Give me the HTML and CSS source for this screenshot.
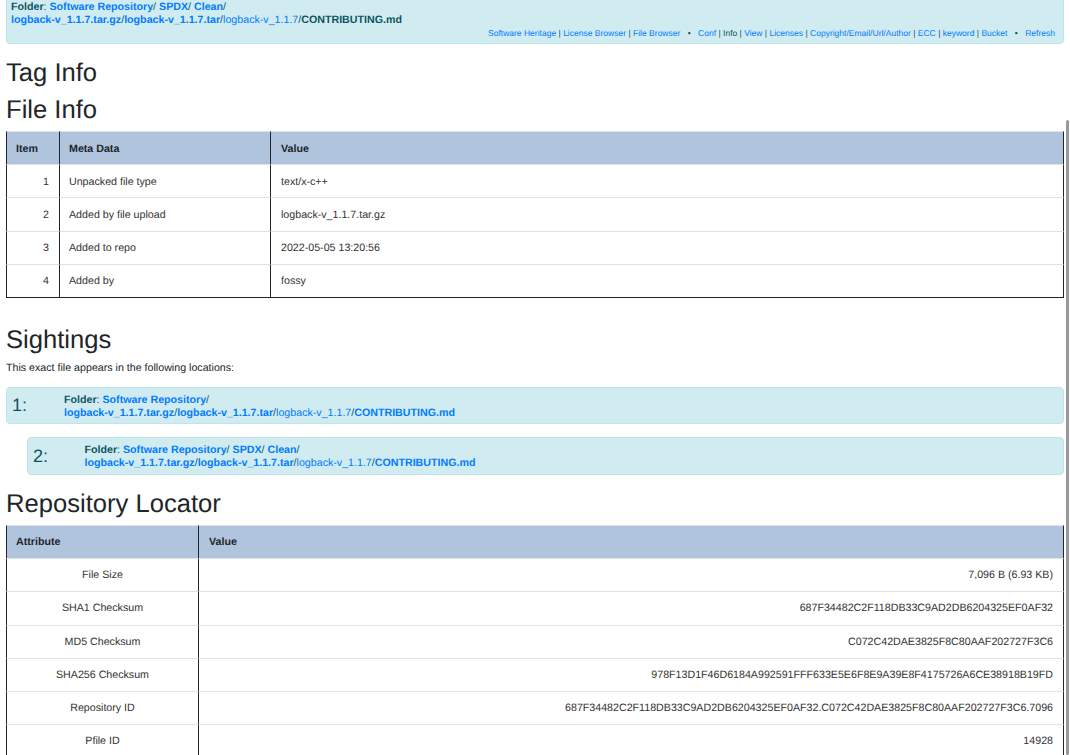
FILE: index.html
```html
<!DOCTYPE html>
<html lang="en">
<head>
  <meta charset="UTF-8">
  <meta name="viewport" content="width=device-width, initial-scale=1.0">
  <title>View File Information</title>
  <link rel="stylesheet" href="styles.css">
</head>

<body>
  <div class="scrollbar"></div>

  <div class="alert top-path">
    <div class="path">
      <b>Folder</b>: <a class="b" href="#">Software Repository</a>/ <a class="b" href="#">SPDX</a>/ <a class="b" href="#">Clean</a>/<br>
      <a class="b" href="#">logback-v_1.1.7.tar.gz</a>/<a class="b" href="#">logback-v_1.1.7.tar</a>/<a href="#">logback-v_1.1.7</a>/<b>CONTRIBUTING.md</b>
    </div>
    <div class="menu">
      <a href="#">Software Heritage</a> | <a href="#">License Browser</a> | <a href="#">File Browser</a>
      <span class="dot">&bull;</span>
      <a href="#">Conf</a> | Info | <a href="#">View</a> | <a href="#">Licenses</a> | <a href="#">Copyright/Email/Url/Author</a> | <a href="#">ECC</a> | <a href="#">keyword</a> | <a href="#">Bucket</a>
      <span class="dot">&bull;</span>
      <a href="#">Refresh</a>
    </div>
  </div>

  <h4>Tag Info</h4>
  <h4 class="tight">File Info</h4>
  <table class="info file-table">
    <tr><th class="col-item">Item</th><th class="col-meta">Meta Data</th><th>Value</th></tr>
    <tr><td class="right">1</td><td>Unpacked file type</td><td>text/x-c++</td></tr>
    <tr><td class="right">2</td><td>Added by file upload</td><td>logback-v_1.1.7.tar.gz</td></tr>
    <tr><td class="right">3</td><td>Added to repo</td><td>2022-05-05 13:20:56</td></tr>
    <tr><td class="right">4</td><td>Added by</td><td>fossy</td></tr>
  </table>

  <h4 class="sightings">Sightings</h4>
  <p class="note">This exact file appears in the following locations:</p>

  <div class="alert sighting">
    <span class="num">1:</span>
    <div class="path">
      <b>Folder</b>: <a class="b" href="#">Software Repository</a>/<br>
      <a class="b" href="#">logback-v_1.1.7.tar.gz</a>/<a class="b" href="#">logback-v_1.1.7.tar</a>/<a href="#">logback-v_1.1.7</a>/<a class="b" href="#">CONTRIBUTING.md</a>
    </div>
  </div>
  <div class="alert sighting nested">
    <span class="num">2:</span>
    <div class="path">
      <b>Folder</b>: <a class="b" href="#">Software Repository</a>/ <a class="b" href="#">SPDX</a>/ <a class="b" href="#">Clean</a>/<br>
      <a class="b" href="#">logback-v_1.1.7.tar.gz</a>/<a class="b" href="#">logback-v_1.1.7.tar</a>/<a href="#">logback-v_1.1.7</a>/<a class="b" href="#">CONTRIBUTING.md</a>
    </div>
  </div>

  <h4 class="tight">Repository Locator</h4>
  <table class="info">
    <tr><th class="col-attr">Attribute</th><th>Value</th></tr>
    <tr><td class="center">File Size</td><td class="right">7,096 B (6.93 KB)</td></tr>
    <tr><td class="center">SHA1 Checksum</td><td class="right">687F34482C2F118DB33C9AD2DB6204325EF0AF32</td></tr>
    <tr><td class="center">MD5 Checksum</td><td class="right">C072C42DAE3825F8C80AAF202727F3C6</td></tr>
    <tr><td class="center">SHA256 Checksum</td><td class="right">978F13D1F46D6184A992591FFF633E5E6F8E9A39E8F4175726A6CE38918B19FD</td></tr>
    <tr><td class="center">Repository ID</td><td class="right">687F34482C2F118DB33C9AD2DB6204325EF0AF32.C072C42DAE3825F8C80AAF202727F3C6.7096</td></tr>
    <tr><td class="center">Pfile ID</td><td class="right">14928</td></tr>
  </table>
</body>
</html>
```

FILE: styles.css
```css
html {
  height: 755px;
  overflow: hidden;
}

body {
  margin: 0;
  padding: 0 6px;
  font-family: "Liberation Sans", Arial, sans-serif;
  font-size: 10.67px;
  line-height: 1.5;
  color: #212529;
  text-rendering: geometricPrecision;
}

a {
  color: #007bff;
  text-decoration: none;
}

.b {
  font-weight: bold;
}

h4 {
  margin: 0 0 7px;
  font-size: 25.6px;
  font-weight: 500;
  line-height: 30px;
}

h4.tight {
  margin-bottom: 6px;
}

.scrollbar {
  position: fixed;
  top: 120px;
  right: 1px;
  width: 3px;
  height: 635px;
  border-radius: 2px;
  background: #999;
}

.alert {
  box-sizing: border-box;
  background: #d1ecf1;
  border: 1px solid #bee5eb;
  border-radius: 4px;
  color: #0c5460;
}

.path {
  line-height: 13px;
}

.top-path {
  height: 52px;
  margin-top: -8px;
  margin-bottom: 14px;
  padding: 8px 8px 0 4px;
}

.menu {
  font-size: 8.53px;
  line-height: 13px;
  text-align: right;
}

.dot {
  margin: 0 5px;
}

.info {
  width: 100%;
  border-collapse: separate;
  border-spacing: 0;
}

.info th,
.info td {
  padding: 8.1px 10px;
  border-top: 1px solid #dee2e6;
  border-left: 1px solid #212529;
  text-align: left;
  font-weight: normal;
  color: #333;
}

.info.file-table th,
.info.file-table td {
  padding-top: 8.5px;
  padding-bottom: 7.7px;
}

.info th:not(:last-child),
.info td:not(:last-child):not(.center) {
  padding-left: 9px;
}

.info th:last-child,
.info td:last-child {
  border-right: 1px solid #212529;
}

.info tr:last-child td {
  border-bottom: 1px solid #212529;
}

.info th {
  background: #b0c4de;
  font-weight: bold;
  color: #212529;
}

.info .right {
  text-align: right;
}

.info .center {
  text-align: center;
}

.col-item {
  width: 33px;
}

.col-meta {
  width: 191px;
}

.col-attr {
  width: 172px;
}

.sightings {
  margin-top: 27px;
}

.note {
  margin: 0 0 12px;
  line-height: 13px;
}

.sighting {
  display: flex;
  align-items: center;
  height: 37px;
  margin-bottom: 13px;
  padding-left: 5px;
}

.sighting .path {
  padding-top: 3px;
}

.nested {
  height: 38px;
  margin-left: 21px;
  margin-bottom: 14px;
}

.nested .path {
  padding-top: 2px;
}

.num {
  width: 52px;
  font-size: 18px;
  line-height: 1;
}

.nested .num {
  width: 51.5px;
}
```
